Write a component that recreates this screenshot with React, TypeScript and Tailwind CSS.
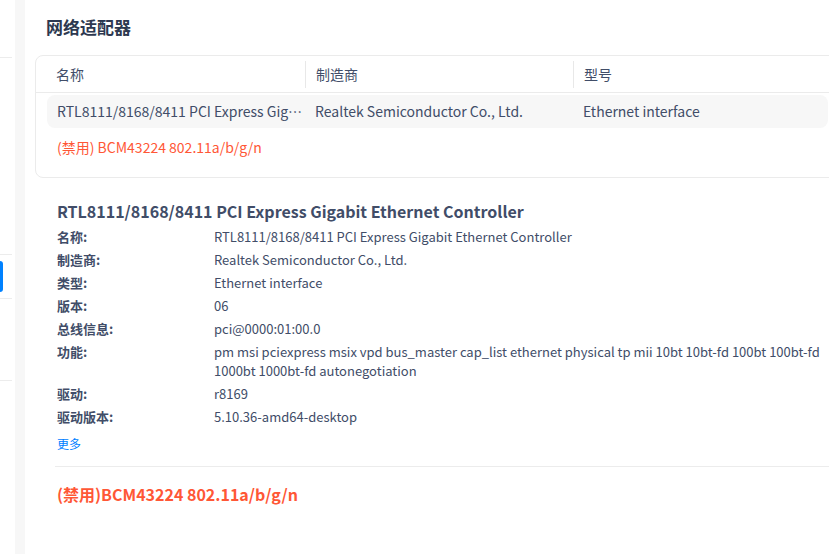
const FONT = { fontFamily: '"Noto Sans CJK SC", "Noto Sans", sans-serif' }

const details: [string, string][] = [
  ['名称:', 'RTL8111/8168/8411 PCI Express Gigabit Ethernet Controller'],
  ['制造商:', 'Realtek Semiconductor Co., Ltd.'],
  ['类型:', 'Ethernet interface'],
  ['版本:', '06'],
  ['总线信息:', 'pci@0000:01:00.0'],
  [
    '功能:',
    'pm msi pciexpress msix vpd bus_master cap_list ethernet physical tp mii 10bt 10bt-fd 100bt 100bt-fd 1000bt 1000bt-fd autonegotiation',
  ],
  ['驱动:', 'r8169'],
  ['驱动版本:', '5.10.36-amd64-desktop'],
]

function Sidebar() {
  return (
    <div className="w-[15px] shrink-0 bg-white flex flex-col">
      <div className="h-[58px] border-b border-[#ececec] mr-[3px]" />
      <div className="h-[197px] border-b border-[#ececec] mr-[3px]" />
      <div className="h-[44px] border-b border-[#ececec] mr-[3px] flex items-center">
        <div className="w-[3px] h-[31px] bg-[#0081ff] rounded-r-md" />
      </div>
      <div className="h-[82px] border-b border-[#ececec] mr-[3px]" />
    </div>
  )
}

function AdapterTable() {
  return (
    <div className="ml-[10px] mt-[16px] w-[805px] shrink-0 border border-[#ebebeb] rounded-lg pb-[13px]">
      <div className="mx-[11px] h-[36px] grid grid-cols-[258px_268px_1fr] items-center text-[14px] text-[#414d68]">
        <div className="pl-[9px]">名称</div>
        <div className="pl-[10px] border-l border-[#e8e8e8] h-[27px] flex items-center">制造商</div>
        <div className="pl-[10px] border-l border-[#e8e8e8] h-[27px] flex items-center">型号</div>
      </div>
      <div className="border-t border-[#ebebeb]" />
      <div className="mx-[11px] mt-[2px] h-[33px] grid grid-cols-[258px_268px_1fr] items-center bg-[#f7f7f7] rounded-lg text-[14px] text-[#414d68]">
        <div className="pl-[10px] truncate">RTL8111/8168/8411 PCI Express Gigabit Ethernet Controller</div>
        <div className="pl-[10px]">Realtek Semiconductor Co., Ltd.</div>
        <div className="pl-[10px]">Ethernet interface</div>
      </div>
      <div className="mx-[11px] mt-[3px] h-[33px] flex items-center pl-[10px] text-[14px] text-[#ff5736]">
        (禁用) BCM43224 802.11a/b/g/n
      </div>
    </div>
  )
}

export default function App() {
  return (
    <div className="w-[829px] h-[554px] overflow-hidden flex bg-white" style={FONT}>
      <Sidebar />
      <div className="w-[10px] shrink-0 bg-[#f7f7f7]" />
      <div className="flex-1 min-w-0 flex flex-col pt-[14px]">
        <h1 className="pl-[21px] text-[17px] leading-[25px] font-bold text-[#2d3850]">网络适配器</h1>
        <AdapterTable />

        <div className="pl-[32px] mt-[21px]">
          <h2 className="text-[16px] leading-[24px] font-bold text-[#414d68]">
            RTL8111/8168/8411 PCI Express Gigabit Ethernet Controller
          </h2>
          <div className="mt-[2px] text-[13px] text-[#414d68]">
            {details.map(([k, v]) => (
              <div key={k} className="flex py-[2px] leading-[19px]">
                <div className="w-[157px] shrink-0 font-bold">{k}</div>
                <div className="flex-1">{v}</div>
              </div>
            ))}
          </div>
          <div className="mt-[7px] text-[12px] leading-[18px] text-[#0081ff]">更多</div>
        </div>
        <div className="ml-[30px] mt-[13px] border-t border-[#ececec]" />
        <div className="pl-[32px] mt-[15px] text-[16px] leading-[24px] font-bold text-[#ff5736]">
          (禁用)BCM43224 802.11a/b/g/n
        </div>
      </div>
    </div>
  )
}
